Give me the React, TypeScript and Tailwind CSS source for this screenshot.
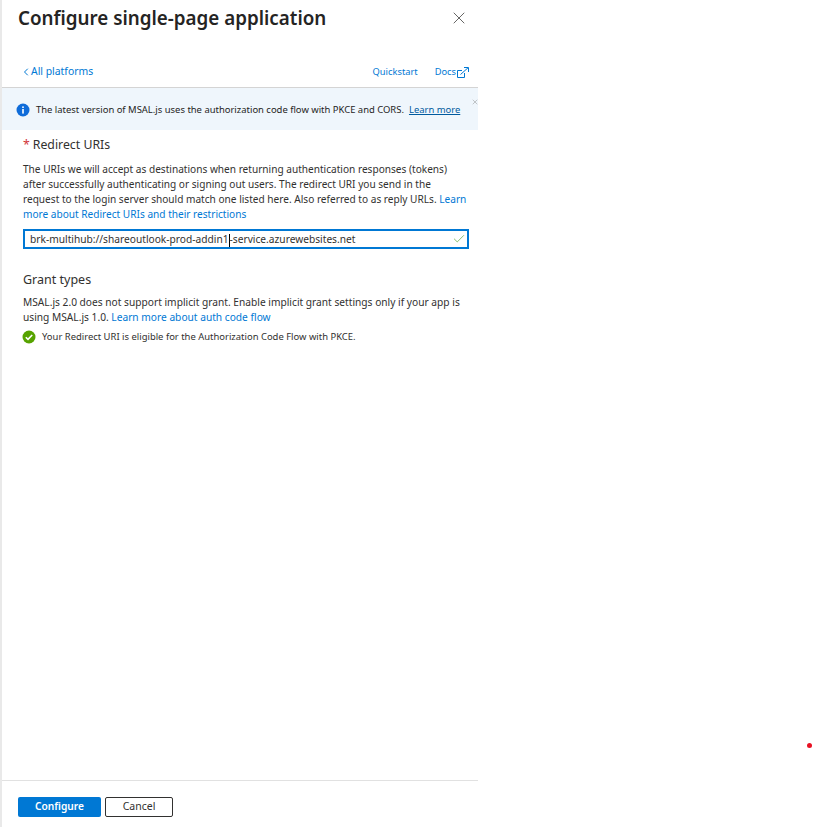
import React from "react";
import { ChevronLeft, X, Check } from "lucide-react";

const App = () => {
  return (
    <div className="relative h-[827px] w-[813px] overflow-hidden bg-white font-['Noto_Sans',sans-serif] text-[#1b1a19]">
      <div className="flex h-full w-[478px] flex-col border-l-2 border-[#e9e9e9]">
        {/* Header */}
        <div className="flex h-[53px] shrink-0 items-start justify-between pl-[16px] pr-[9px] pt-[4px]">
          <h1 className="text-[18.8px] leading-[28px] font-semibold text-[#252423]">
            Configure single-page application
          </h1>
          <X size={20} strokeWidth={0.9} className="mt-[4px] text-[#323130]" />
        </div>

        {/* Links */}
        <div className="flex h-[35px] shrink-0 items-center justify-between border-b border-[#d4d4d4] pl-[18px] pr-[9px] pt-[4px] text-[#0078d4]">
          <a className="flex items-center text-[10.4px]">
            <ChevronLeft size={12} strokeWidth={2} className="-mr-[1px]" />
            <span>All platforms</span>
          </a>
          <div className="flex items-center gap-[17px] text-[9.3px]">
            <a>Quickstart</a>
            <a className="flex items-center gap-[1px]">
              Docs
              <svg width="12" height="11" viewBox="0 0 12 11" fill="none" stroke="currentColor" strokeWidth="1">
                <path d="M5 3.5H.5v7h7V6" />
                <path d="M3.5 7.5 11 .8M7 .5h4.5V5" />
              </svg>
            </a>
          </div>
        </div>

        {/* Banner */}
        <div className="relative flex h-[42px] shrink-0 items-center overflow-hidden bg-[#eff6fc] pl-[14px] pt-[2px] text-[9.45px] text-[#252423]">
          <svg width="14" height="14" viewBox="0 0 14 14" className="mr-[6px] shrink-0">
            <circle cx="7" cy="7" r="6.5" fill="#0f6cd9" />
            <rect x="6.2" y="6" width="1.6" height="4.6" fill="#fff" />
            <rect x="6.2" y="3.4" width="1.6" height="1.6" fill="#fff" />
          </svg>
          <span>The latest version of MSAL.js uses the authorization code flow with PKCE and CORS.</span>
          <a className="ml-[5px] text-[#005a9e] underline">Learn more</a>
          <X size={8} strokeWidth={1} className="absolute top-[10px] -right-[1px] text-[#605e5c]" />
        </div>

        {/* Form */}
        <div className="flex flex-1 flex-col pl-[21px] pr-[9px]">
          <div className="mt-[6px] flex gap-[3px] text-[12.3px] leading-[18px] text-[#323130]">
            <span className="text-[#d13438]">*</span>
            <span>Redirect URIs</span>
          </div>
          <p className="mt-[8px] text-[10.1px] leading-[15px] text-[#323130]">
            The URIs we will accept as destinations when returning authentication responses (tokens)
            <br />
            after successfully authenticating or signing out users. The redirect URI you send in the
            <br />
            request to the login server should match one listed here. Also referred to as reply URLs.{" "}
            <a className="text-[#0078d4]">
              Learn
              <br />
              more about Redirect URIs and their restrictions
            </a>
          </p>
          <div className="relative mt-[7px] flex h-[20px] items-center border-2 border-[#0078d4] pl-[5px] pt-[2px] text-[10.2px] text-[#323130]">
            <span>brk-multihub://shareoutlook-prod-addin1</span>
            <span className="h-[13px] w-px bg-black" />
            <span>-service.azurewebsites.net</span>
            <Check size={14} strokeWidth={1.6} className="absolute right-[1px] top-[1px] text-[#7fba64]" />
          </div>

          <div className="mt-[22px] text-[12.5px] leading-[18px] text-[#323130]">Grant types</div>
          <p className="mt-[6px] text-[10.2px] leading-[15px] text-[#323130]">
            MSAL.js 2.0 does not support implicit grant. Enable implicit grant settings only if your app is
            <br />
            using MSAL.js 1.0. <a className="text-[#0078d4]">Learn more about auth code flow</a>
          </p>
          <div className="-ml-px mt-[5px] flex items-center text-[9.45px] leading-[14px] text-[#323130]">
            <svg width="14" height="14" viewBox="0 0 14 14" className="mr-[6px] shrink-0">
              <circle cx="7" cy="7" r="6.5" fill="#57a300" />
              <path d="M3.8 7.2 6 9.4 10.2 5" fill="none" stroke="#fff" strokeWidth="1.6" />
            </svg>
            <span>Your Redirect URI is eligible for the Authorization Code Flow with PKCE.</span>
          </div>
        </div>

        {/* Footer */}
        <div className="flex h-[47px] shrink-0 items-start gap-[4px] border-t border-[#e1e1e1] pl-[16px] pt-[16px]">
          <button className="h-[20px] w-[83px] rounded-[2px] bg-[#0078d4] text-[10.2px] font-semibold text-white">
            Configure
          </button>
          <button className="h-[20px] w-[68px] rounded-[2px] border border-[#323130] text-[10.5px] text-[#323130]">
            Cancel
          </button>
        </div>
      </div>

      {/* Stray red dot */}
      <div className="absolute left-[807px] top-[743px] h-[5px] w-[5px] rounded-full bg-[#e81123]" />
    </div>
  );
};

export default App;
